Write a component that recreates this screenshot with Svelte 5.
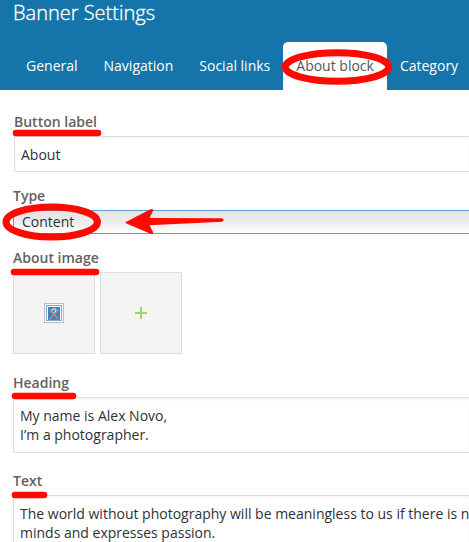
<script>
  const tabs = ['General', 'Navigation', 'Social links', 'About block', 'Category'];
  const active = 'About block';
</script>

<div class="page">
  <header>
    <h1>Banner Settings</h1>
    <nav>
      {#each tabs as tab}
        <span class="tab" class:active={tab === active}>{tab}</span>
      {/each}
    </nav>
  </header>

  <main>
    <section class="field first">
      <div class="label">Button label</div>
      <div class="box single">About</div>
    </section>
    <section class="field type">
      <div class="label">Type</div>
      <div class="select">Content</div>
    </section>
    <section class="field image">
      <div class="label">About image</div>
      <div class="tiles">
        <div class="tile">
          <svg width="20" height="20" viewBox="0 0 20 20">
            <rect x=".5" y=".5" width="19" height="19" fill="#fff" stroke="#bdbdbd" />
            <rect x="2.5" y="2.5" width="15" height="15" fill="#fff" stroke="#7fa9d3" />
            <rect x="4" y="4" width="12" height="13" fill="#2b8dc6" />
            <path d="M8 8.5V7.2Q8 5.8 10 5.8T12 7.2Q12 8.7 10 9.5V11" fill="none" stroke="#c4e5f5" stroke-width="1.3" />
            <path d="M5.5 7L14.5 16M14.5 7L5.5 16" stroke="#ee6e78" stroke-width="1.5" />
          </svg>
        </div>
        <div class="tile">
          <svg width="12" height="12" viewBox="0 0 12 12">
            <path d="M0 6H12M6 0V12" stroke="#9bd66c" stroke-width="2" />
          </svg>
        </div>
      </div>
    </section>
    <section class="field heading">
      <div class="label">Heading</div>
      <div class="box area">My name is Alex Novo,<br />I’m a photographer.</div>
    </section>
    <section class="field text">
      <div class="label">Text</div>
      <div class="box area tall">The world without photography will be meaningless to us if there is n<br />minds and expresses passion.</div>
    </section>
  </main>

  <svg class="marks" width="469" height="542" viewBox="0 0 469 542" fill="none" stroke="#ff0a00" stroke-linecap="round">
    <ellipse cx="337" cy="67" rx="51.7" ry="14.2" stroke-width="7" />
    <ellipse cx="51.7" cy="222" rx="45.7" ry="15" stroke-width="7" />
    <path d="M16 133H98M14 272H96M15 396H73M15 495H44" stroke-width="6.6" />
    <path d="M125.5 222.3L150.5 209.2Q154 208.2 153 211L149.5 218L222 218.2Q225.5 220 222 221.7L149.5 225.3L153 232Q153.5 235 150.5 233.8L126.5 223.5Q124.5 222.8 125.5 222.3Z" fill="#ff0a00" stroke="none" />
  </svg>
</div>

<style>
  :global(body) { margin: 0; }
  .page {
    position: relative;
    width: 469px;
    height: 542px;
    overflow: hidden;
    background: #fff;
    font: 14px/19px "Open Sans", "Noto Sans", sans-serif;
    color: #2d3237;
  }
  header {
    box-sizing: border-box;
    height: 90px;
    padding: 0 13px;
    background: #1574a9;
    color: #fff;
    display: flex;
    flex-direction: column;
    justify-content: space-between;
  }
  h1 { margin: 0; font-size: 20px; line-height: 26px; font-weight: 300; -webkit-text-stroke: 0.35px #fff; white-space: nowrap; }
  nav { display: flex; height: 48px; }
  .tab { flex: none; padding: 0 13px; line-height: 48px; white-space: nowrap; }
  .active { background: #fff; color: #555; border-radius: 5px 5px 0 0; }
  main { padding: 22px 0 0 13px; }
  .first { margin-left: 1px; }
  .type, .image { margin-top: 14px; }
  .heading { margin-top: 19px; }
  .text { margin-top: 18px; }
  .label { height: 20px; line-height: 20px; margin-bottom: 4px; font-weight: 600; color: #626262; }
  .box {
    box-sizing: border-box;
    border: 1px solid #ddd;
    border-right: 0;
    box-shadow: inset 0 2px 2px #f6f6f6;
    white-space: nowrap;
  }
  .single { height: 36px; line-height: 36px; padding-left: 6px; }
  .select {
    box-sizing: border-box;
    height: 24px;
    line-height: 22px;
    padding-left: 8px;
    border: 1px solid #5b9dd9;
    border-right: 0;
    background: linear-gradient(#e4e4e4, #ececec 50%, #fff);
  }
  .tiles { display: flex; gap: 5px; }
  .tile {
    box-sizing: border-box;
    width: 82px;
    height: 82px;
    border: 1px solid #ddd;
    background: #f4f4f4;
    display: flex;
    align-items: center;
    justify-content: center;
  }
  .area { height: 56px; padding: 8px 0 0 6px; }
  .tall { height: 80px; }
  .marks { position: absolute; left: 0; top: 0; }
</style>
